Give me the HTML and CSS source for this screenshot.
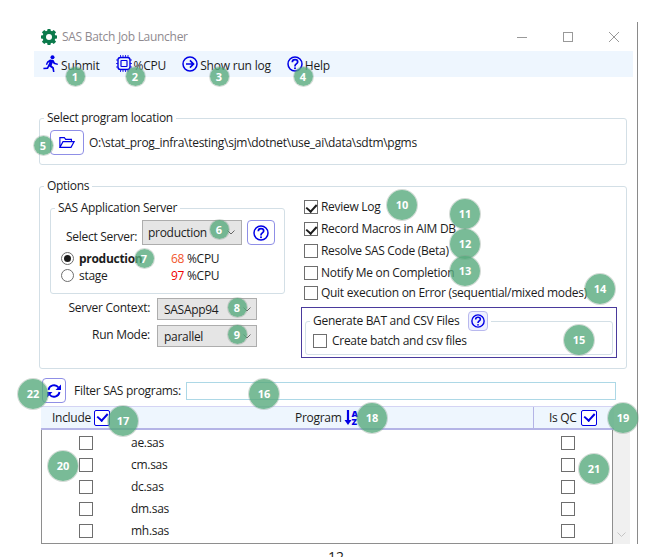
FILE: index.html
```html
<!DOCTYPE html>
<html lang="en">
<head>
	<meta charset="UTF-8">
	<title>SAS Batch Job Launcher</title>
	<link rel="stylesheet" href="styles.css">
</head>
<body>
	<div class="window">
		<div class="titlebar">
			<svg class="logo" width="16" height="16" viewBox="0 0 16 16"><path fill="#0b7a4b" d="M6.600 0h2.800l.4 1.800 1.300.5L12.700.900l2.400 2.400-1.400 1.600.5 1.300 1.800.4v2.800l-1.800.4-.5 1.300 1.400 1.600-2.400 2.400-1.600-1.400-1.300.5-.4 1.800H6.600l-.4-1.800-1.300-.5-1.600 1.400L.9 12.700l1.400-1.600-.5-1.300L0 9.400V6.600l1.800-.4.5-1.300L.9 3.300 3.300.9l1.600 1.400 1.300-.5z"/><circle cx="8" cy="8" r="3" fill="#fff"/></svg>
			<span class="title">SAS Batch Job Launcher</span>
			<div class="winbtns">
				<svg width="12" height="12" viewBox="0 0 12 12"><path stroke="#999" d="M1 6.500h10"/></svg>
				<svg width="12" height="12" viewBox="0 0 12 12"><rect x="1.500" y="1.500" width="9" height="9" fill="none" stroke="#999"/></svg>
				<svg width="12" height="12" viewBox="0 0 12 12"><path stroke="#999" fill="none" d="M1 1l10 10M11 1L1 11"/></svg>
			</div>
		</div>

		<div class="toolbar">
			<span class="tool">
				<svg width="16" height="18" viewBox="0 0 16 18"><g fill="#0000e6"><circle cx="9.500" cy="2.300" r="2"/><path d="M7 4.500l3.500.5 1.500 2.800 3 .9-.4 1.400-3.900-1.100-.9-1.400-1.200 3 2.300 2 .6 4.400H10l-.7-3.600-3-2-1.300 2.500-4.500.4-.2-1.500 3.700-.3L6.500 7.200l-1.400.5-1 2.300-1.300-.6 1.300-3z"/></g></svg>
				Submit
			</span>
			<span class="tool">
				<svg width="16" height="17" viewBox="0 0 16 17"><g fill="none" stroke="#0000e6"><rect x="2" y="2.500" width="12" height="12" rx="2.500" stroke-width="1.400"/><rect x="5" y="5.500" width="6" height="6" rx=".5" stroke-width="1.200"/><path d="M4.500 0v2M7 0v2M9.500 0v2M12 0v2M4.500 15v2M7 15v2M9.500 15v2M12 15v2M0 5h2M0 8.500h2M0 12h2M14 5h2M14 8.500h2M14 12h2" stroke-width=".8"/></g></svg>
				%CPU
			</span>
			<span class="tool">
				<svg width="16" height="16" viewBox="0 0 16 16"><circle cx="8" cy="8" r="7" fill="none" stroke="#0000e6" stroke-width="1.500"/><path fill="#0000e6" d="M8.500 3.800L12.700 8l-4.200 4.200-1.100-1.100 2.200-2.300H4V7.200h5.600L7.400 4.900z"/></svg>
				Show run log
			</span>
			<span class="tool">
				<svg class="help" width="16" height="16" viewBox="0 0 16 16"><circle cx="8" cy="8" r="7" fill="none" stroke="#0000e6" stroke-width="1.500"/><path fill="none" stroke="#0000e6" stroke-width="1.700" d="M5.300 6.200C5.300 4.500 6.500 3.700 8 3.700s2.700.9 2.700 2.300c0 1.900-2.700 2-2.700 4v.4"/><circle cx="8" cy="12.300" r="1" fill="#0000e6"/></svg>
				Help
			</span>
		</div>

		<fieldset class="group location">
			<legend>Select program location</legend>
			<div class="location-row">
				<button class="icon-btn folder-btn">
					<svg width="16" height="13" viewBox="0 0 18 14"><path fill="none" stroke="#0000e6" stroke-width="1.300" d="M1 12.500V1.500h5l1.500 2H14v2.500M1 12.500h12.500L17 6H4.500z"/></svg>
				</button>
				<span>O:\stat_prog_infra\testing\sjm\dotnet\use_ai\data\sdtm\pgms</span>
			</div>
		</fieldset>

		<fieldset class="group options">
			<legend>Options</legend>
			<div class="options-body">
				<div class="options-left">
					<fieldset class="group server">
						<legend>SAS Application Server</legend>
						<div class="server-row">
							<label class="server-label">Select Server:</label>
							<div class="combo combo-server"><span>production</span><svg width="8" height="5" viewBox="0 0 8 5"><path fill="none" stroke="#666" d="M.5.500L4 4 7.500.500"/></svg></div>
							<button class="icon-btn server-help">
								<svg width="16" height="16" viewBox="0 0 16 16"><circle cx="8" cy="8" r="7" fill="none" stroke="#0000e6" stroke-width="1.500"/><path fill="none" stroke="#0000e6" stroke-width="1.700" d="M5.300 6.200C5.300 4.500 6.500 3.700 8 3.700s2.700.9 2.700 2.300c0 1.900-2.700 2-2.700 4v.4"/><circle cx="8" cy="12.300" r="1" fill="#0000e6"/></svg>
							</button>
						</div>
						<div class="radio-row">
							<span class="radio checked"></span>
							<b class="radio-name">production</b>
							<span class="cpu"><span class="orange">68</span> %CPU</span>
						</div>
						<div class="radio-row">
							<span class="radio"></span>
							<span class="radio-name">stage</span>
							<span class="cpu"><span class="red">97</span> %CPU</span>
						</div>
					</fieldset>
					<div class="field-row context-row">
						<label class="field-label">Server Context:</label>
						<div class="combo"><span>SASApp94</span><svg width="8" height="5" viewBox="0 0 8 5"><path fill="none" stroke="#666" d="M.5.500L4 4 7.500.500"/></svg></div>
					</div>
					<div class="field-row mode-row">
						<label class="field-label">Run Mode:</label>
						<div class="combo"><span>parallel</span><svg width="8" height="5" viewBox="0 0 8 5"><path fill="none" stroke="#666" d="M.5.500L4 4 7.500.500"/></svg></div>
					</div>
				</div>
				<div class="options-right">
					<div class="check-row"><span class="check on"></span>Review Log</div>
					<div class="check-row"><span class="check on"></span>Record Macros in AIM DB</div>
					<div class="check-row"><span class="check"></span>Resolve SAS Code (Beta)</div>
					<div class="check-row"><span class="check"></span>Notify Me on Completion</div>
					<div class="check-row quit"><span class="check"></span>Quit execution on Error (sequential/mixed modes)</div>
					<div class="bat-box">
						<fieldset class="group bat">
							<legend>Generate BAT and CSV Files
								<button class="icon-btn bat-help">
									<svg width="14" height="14" viewBox="0 0 16 16"><circle cx="8" cy="8" r="7" fill="none" stroke="#0000e6" stroke-width="1.600"/><path fill="none" stroke="#0000e6" stroke-width="1.800" d="M5.300 6.200C5.300 4.500 6.500 3.700 8 3.700s2.700.9 2.700 2.300c0 1.900-2.700 2-2.700 4v.4"/><circle cx="8" cy="12.300" r="1" fill="#0000e6"/></svg>
								</button>
							</legend>
							<div class="check-row bat-row"><span class="check"></span>Create batch and csv files</div>
						</fieldset>
					</div>
				</div>
			</div>
		</fieldset>

		<div class="filter-row">
			<button class="icon-btn refresh-btn">
				<svg width="16" height="16" viewBox="0 0 16 16"><g fill="none" stroke="#0000e6" stroke-width="1.800"><path d="M2.500 7A5.600 5.600 0 0 1 12.500 4.500"/><path d="M13.500 9A5.600 5.600 0 0 1 3.500 11.500"/></g><path fill="#0000e6" d="M15 1.500V7H9.500zM1 14.500V9h5.500z"/></svg>
			</button>
			<label class="filter-label">Filter SAS programs:</label>
			<div class="filter-input"></div>
		</div>

		<div class="table">
			<div class="thead">
				<div class="th th-include">Include <span class="head-check"></span></div>
				<div class="th th-program">Program
					<span class="sort-icon">
						<svg width="8" height="17" viewBox="0 0 8 17"><path fill="none" stroke="#0000e6" stroke-width="2.200" d="M4 1v12"/><path fill="#0000e6" d="M.5 11h7L4 16z"/></svg>
						<span class="sort-letters"><span>A</span><span>Z</span></span>
					</span>
				</div>
				<div class="th th-qc">Is QC <span class="head-check"></span></div>
			</div>
			<div class="tbody-wrap">
				<div class="tbody">
					<div class="tr"><span class="check cell-check"></span><span class="cell-name">ae.sas</span><span class="check qc-check"></span></div>
					<div class="tr"><span class="check cell-check"></span><span class="cell-name">cm.sas</span><span class="check qc-check"></span></div>
					<div class="tr"><span class="check cell-check"></span><span class="cell-name">dc.sas</span><span class="check qc-check"></span></div>
					<div class="tr"><span class="check cell-check"></span><span class="cell-name">dm.sas</span><span class="check qc-check"></span></div>
					<div class="tr"><span class="check cell-check"></span><span class="cell-name">mh.sas</span><span class="check qc-check"></span></div>
				</div>
				<div class="scrollbar">
					<svg width="9" height="6" viewBox="0 0 9 6"><path fill="none" stroke="#c4c4c4" d="M.5.500l4 4 4-4"/></svg>
				</div>
			</div>
		</div>
	</div>
	<div class="page-num">12</div>

	<span class="badge b1">1</span>
	<span class="badge b2">2</span>
	<span class="badge b3">3</span>
	<span class="badge b4">4</span>
	<span class="badge b5">5</span>
	<span class="badge b6">6</span>
	<span class="badge b7">7</span>
	<span class="badge b8">8</span>
	<span class="badge b9">9</span>
	<span class="badge big b10">10</span>
	<span class="badge big b11">11</span>
	<span class="badge big b12">12</span>
	<span class="badge big b13">13</span>
	<span class="badge big b14">14</span>
	<span class="badge big b15">15</span>
	<span class="badge big b16">16</span>
	<span class="badge big b17">17</span>
	<span class="badge big b18">18</span>
	<span class="badge big b19">19</span>
	<span class="badge big b20">20</span>
	<span class="badge big b21">21</span>
	<span class="badge big b22">22</span>
</body>
</html>
```
FILE: styles.css
```css
*{box-sizing: border-box;}
html,body{
	margin: 0;
	padding: 0;
	height: 557px;
	overflow: hidden;
	background: #fff;
}
body{
	position: relative;
	font-family: "Open Sans", "Liberation Sans", sans-serif;
	font-size: 12px;
	letter-spacing: -0.29px;
	line-height: 16px;
	color: #1c1c1c;
}
.window{
	width: 638px;
	height: 522px;
	margin-top: 22px;
	border-right: 1px solid #8a8a8a;
	display: flow-root;
}

/* title bar */
.titlebar{
	height: 29px;
	display: flex;
	align-items: center;
	padding: 0 17px 0 41px;
}
.title{
	margin-left: 5px;
	color: #8f8a8f;
}
.winbtns{
	margin-left: auto;
	display: flex;
	gap: 34px;
}

/* toolbar */
.toolbar{
	margin-left: 34px;
	width: 599px;
	height: 26px;
	background: #eef6fe;
	display: flex;
	align-items: center;
	padding: 3px 0 0 9px;
	letter-spacing: -0.2px;
}
.tool{
	display: flex;
	align-items: center;
	gap: 2px;
	margin-right: 16px;
}
.tool svg{
	margin-top: -4px;
}

/* groups */
.group{
	margin: 0;
	padding: 0;
	min-width: 0;
	border: 1px solid #d3dfe6;
	border-radius: 3px;
}
.group legend{
	padding: 0 3px;
	margin-left: 4px;
	line-height: 16px;
}
.location{
	margin: 33px 0 0 39px;
	width: 588px;
	height: 55px;
}
.location-row{
	display: flex;
	align-items: center;
	gap: 5px;
	padding: 4px 0 0 10px;
}
.icon-btn{
	display: flex;
	align-items: center;
	justify-content: center;
	padding: 0;
	background: #fff;
	border: 1px solid #8f8fe6;
	border-radius: 4px;
}
.folder-btn{
	width: 34px;
	height: 25px;
}
.options{
	margin: 13px 0 0 39px;
	width: 588px;
	height: 191px;
}
.options-body{
	display: flex;
	padding: 2px 0 0 10px;
}
.options-left{
	width: 235px;
	margin-right: 19px;
	padding-top: 4px;
}
.server{
	height: 94px;
}
.server-row{
	display: flex;
	align-items: center;
	height: 25px;
	margin-top: 4px;
	margin-bottom: 5px;
}
.server-label{
	margin: 8px 5px 0 15px;
	width: 71px;
	white-space: nowrap;
}
.combo{
	display: flex;
	align-items: center;
	justify-content: space-between;
	background: #e5e5e5;
	border: 1px solid #adadad;
	width: 100px;
	height: 22px;
	padding: 1px 5px 0 6px;
}
.combo-server{
	height: 25px;
	padding: 0 6px 0 5px;
}
.server-help{
	margin-left: 5px;
	width: 28px;
	height: 25px;
}
.radio-row{
	display: flex;
	align-items: center;
	height: 17px;
	padding-left: 10px;
}
.radio{
	width: 13px;
	height: 13px;
	border: 1px solid #6e6e6e;
	border-radius: 50%;
	background: #fff;
	margin-right: 5px;
	display: flex;
	align-items: center;
	justify-content: center;
}
.radio.checked::after{
	content: "";
	width: 7px;
	height: 7px;
	border-radius: 50%;
	background: #1c1c1c;
}
.radio-name{
	width: 92px;
}
.orange{color: #f2552c;}
.red{color: #f00000;}
.field-row{
	display: flex;
	align-items: center;
	height: 22px;
}
.context-row{margin-top: 4px;}
.mode-row{margin-top: 5px;}
.field-label{
	width: 100px;
	text-align: right;
	margin-right: 7px;
	margin-top: -2px;
}
.check-row{
	display: flex;
	align-items: center;
	height: 22px;
	white-space: nowrap;
}
.quit{
	height: 17px;
	padding-top: 1px;
}
.check{
	display: block;
	flex: none;
	position: relative;
	width: 14px;
	height: 14px;
	border: 1px solid #6e6e6e;
	background: #fff;
	margin-right: 3px;
}
.check.on::after,
.head-check::after{
	content: "";
	position: absolute;
	left: 3px;
	top: 1px;
	width: 5px;
	height: 8px;
	border: solid #1c1c1c;
	border-width: 0 2px 2px 0;
	transform: rotate(42deg);
}
.bat-box{
	margin: 6px 0 0 -3px;
	width: 316px;
	height: 51px;
	border: 1px solid #4a3a9c;
	padding: 3px 3px 0;
}
.bat{
	height: 44px;
}
.bat legend{
	display: flex;
	align-items: center;
	margin-left: 4px;
	padding: 0 3px;
	line-height: 18px;
	height: 20px;
}
.bat-help{
	width: 20px;
	height: 20px;
	margin-left: 9px;
	background: #eef0ff;
	border-color: #b9b9ee;
}
.bat-row{
	padding-left: 7px;
	height: 20px;
}
.bat-row .check{
	margin-right: 5px;
}

/* filter */
.filter-row{
	display: flex;
	align-items: center;
	margin: 9px 0 0 42px;
	height: 25px;
}
.refresh-btn{
	width: 24px;
	height: 25px;
}
.filter-label{
	margin-left: 8px;
	width: 112px;
	white-space: nowrap;
}
.filter-input{
	width: 430px;
	height: 18px;
	border: 1px solid #add8e6;
	margin-top: 1px;
}

/* table */
.table{
	margin: 3px 0 0 41px;
	width: 589px;
}
.thead{
	display: flex;
	height: 24px;
	width: 573px;
	background: #eef6fe;
	border-top: 1px solid #d4d4f4;
	border-bottom: 2px solid #b4b4e6;
}
.th{
	display: flex;
	align-items: center;
}
.th-include{
	width: 80px;
	padding-left: 11px;
}
.th-program{
	width: 412px;
	gap: 2px;
	padding-left: 174px;
}
.th-qc{
	flex: 1;
	border-left: 1px solid #b4b4e6;
	padding-left: 15px;
}
.th-qc .head-check{
	margin-left: 4px;
}
.head-check{
	position: relative;
	display: block;
	width: 16px;
	height: 16px;
	margin-left: 3px;
	border: 1.500px solid #0000e6;
	border-radius: 2px;
	background: #fff;
}
.head-check::after{
	left: 4px;
	top: 0;
	border-color: #0000e6;
}
.sort-icon{
	display: flex;
	align-items: center;
}
.sort-letters{
	display: flex;
	flex-direction: column;
	color: #0000e6;
	font-size: 9px;
	font-weight: 800;
	letter-spacing: 0;
	line-height: 8px;
}
.tbody-wrap{
	display: flex;
}
.tbody{
	width: 573px;
	height: 114px;
	padding-top: 2px;
	border: 1px solid #8e8e8e;
	border-top: 0;
}
.tr{
	display: flex;
	align-items: center;
	height: 22px;
}
.tr .check{
	margin-top: -1px;
}
.cell-check{
	margin-left: 37px;
	margin-right: 0;
}
.cell-name{
	margin-left: 38px;
	width: 430px;
}
.qc-check{
	margin: 0;
}
.scrollbar{
	width: 17px;
	height: 114px;
	background: #f0f0f0;
	display: flex;
	justify-content: center;
	align-items: flex-end;
	padding-bottom: 6px;
}

.page-num{
	width: 672px;
	margin-top: 5px;
	text-align: center;
	font-size: 14px;
	letter-spacing: 0;
}

/* numbered callouts over the screenshot */
.badge{
	position: absolute;
	width: 19px;
	height: 19px;
	margin: -9.500px 0 0 -9.500px;
	border-radius: 50%;
	background: rgba(88,170,125,.8);
	box-shadow: 0 0 0 1px rgba(130,150,135,.35);
	color: #fff;
	font-weight: 700;
	font-size: 11px;
	letter-spacing: 0;
	text-align: center;
	line-height: 19px;
}
.badge.big{
	width: 30px;
	height: 30px;
	margin: -15px 0 0 -15px;
	line-height: 30px;
}
.b1{left: 75px; top: 76px;}
.b2{left: 135px; top: 76px;}
.b3{left: 219px; top: 76px;}
.b4{left: 303px; top: 76px;}
.b5{left: 43px; top: 145px;}
.b6{left: 219px; top: 229px;}
.b7{left: 144px; top: 258px;}
.b8{left: 237px; top: 307px;}
.b9{left: 237px; top: 334px;}
.b10{left: 402px; top: 205px;}
.b11{left: 465px; top: 214px;}
.b12{left: 465px; top: 244px;}
.b13{left: 465px; top: 271px;}
.b14{left: 600px; top: 289px;}
.b15{left: 579px; top: 340px;}
.b16{left: 264px; top: 394px;}
.b17{left: 123px; top: 421px;}
.b18{left: 372px; top: 418px;}
.b19{left: 623px; top: 418px;}
.b20{left: 63px; top: 466px;}
.b21{left: 594px; top: 469px;}
.b22{left: 33px; top: 394px;}
```
